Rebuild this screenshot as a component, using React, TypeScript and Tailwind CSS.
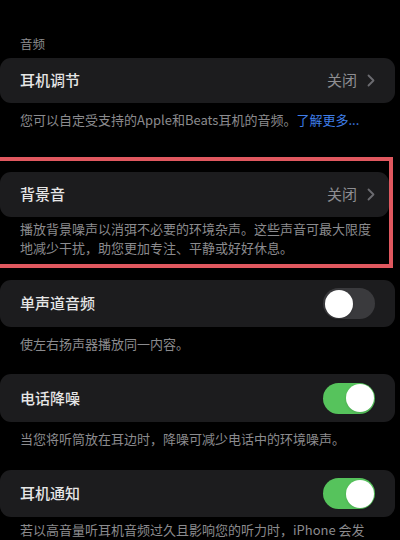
import React from "react"

const cjk = "font-['Noto_Sans_CJK_SC','Noto_Sans',sans-serif]"

function Chevron() {
  return (
    <svg width="8" height="13" viewBox="0 0 8 13" fill="none" className="ml-[10px]">
      <path d="M1.5 1.5L6.5 6.5L1.5 11.5" stroke="#6b6b70" strokeWidth="1.8" strokeLinecap="round" strokeLinejoin="round" />
    </svg>
  )
}

function Toggle({ on }: { on: boolean }) {
  return (
    <div
      className={`relative w-[52px] h-[31px] rounded-full ${on ? "bg-[#56c35c]" : "bg-[#3a3a3d]"}`}
    >
      <div
        className={`absolute top-[1.5px] w-[28px] h-[28px] rounded-full bg-white shadow ${on ? "right-[1.5px]" : "left-[1.5px]"}`}
      />
    </div>
  )
}

function Row({ label, children, h, pr = "pr-[20px]" }: { label: string; children: React.ReactNode; h: string; pr?: string }) {
  return (
    <div className={`flex items-center justify-between bg-[#1c1c1e] rounded-[11px] pl-[20px] ${pr} ${h}`}>
      <span className="text-[15px] font-medium text-[#e6e6e6]">{label}</span>
      <div className="flex items-center">{children}</div>
    </div>
  )
}

function Note({ children, className = "pr-[26px]" }: { children: React.ReactNode; className?: string }) {
  return <p className={`pl-[20px] text-[13px] leading-[19px] text-[#8b8b8e] ${className}`}>{children}</p>
}

export default function App() {
  return (
    <div className={`w-[400px] h-[540px] overflow-hidden bg-black ${cjk}`}>
      <div className="pt-[36px] px-[20px] text-[12.5px] leading-[16px] text-[#8b8b8e]">音频</div>

      <div className="mt-[6px] mr-[5px]">
        <Row label="耳机调节" h="h-[45px]">
          <span className="text-[15px] text-[#8e8e92]">关闭</span>
          <Chevron />
        </Row>
      </div>
      <Note className="mt-[7px] pr-[26px]">
        您可以自定受支持的Apple和Beats耳机的音频。<span className="text-[#3f7ee8]">了解更多...</span>
      </Note>

      {/* highlighted block */}
      <div className="mt-[28px] mr-[7px] border-t-4 border-r-4 border-b-4 border-[#e0585f]">
        <div className="pt-[11px]">
          <Row label="背景音" h="h-[45px]" pr="pr-[14px]">
            <span className="text-[15px] text-[#8e8e92]">关闭</span>
            <Chevron />
          </Row>
        </div>
        <Note className="mt-[2px] pb-[7px] pr-[14px]">
          播放背景噪声以消弭不必要的环境杂声。这些声音可最大限度地减少干扰，助您更加专注、平静或好好休息。
        </Note>
      </div>

      <div className="mt-[12px] mr-[5px]">
        <Row label="单声道音频" h="h-[47px]">
          <Toggle on={false} />
        </Row>
      </div>
      <Note className="mt-[7px] pr-[26px]">使左右扬声器播放同一内容。</Note>

      <div className="mt-[21px] mr-[5px]">
        <Row label="电话降噪" h="h-[48px]">
          <Toggle on />
        </Row>
      </div>
      <Note className="mt-[7px] pr-[26px]">当您将听筒放在耳边时，降噪可减少电话中的环境噪声。</Note>

      <div className="mt-[22px] mr-[5px]">
        <Row label="耳机通知" h="h-[47px]">
          <Toggle on />
        </Row>
      </div>
      <Note className="mt-[3px] pr-[26px]">
        若以高音量听耳机音频过久且影响您的听力时，iPhone 会发送通知以提醒您的听力健康。
      </Note>
    </div>
  )
}
